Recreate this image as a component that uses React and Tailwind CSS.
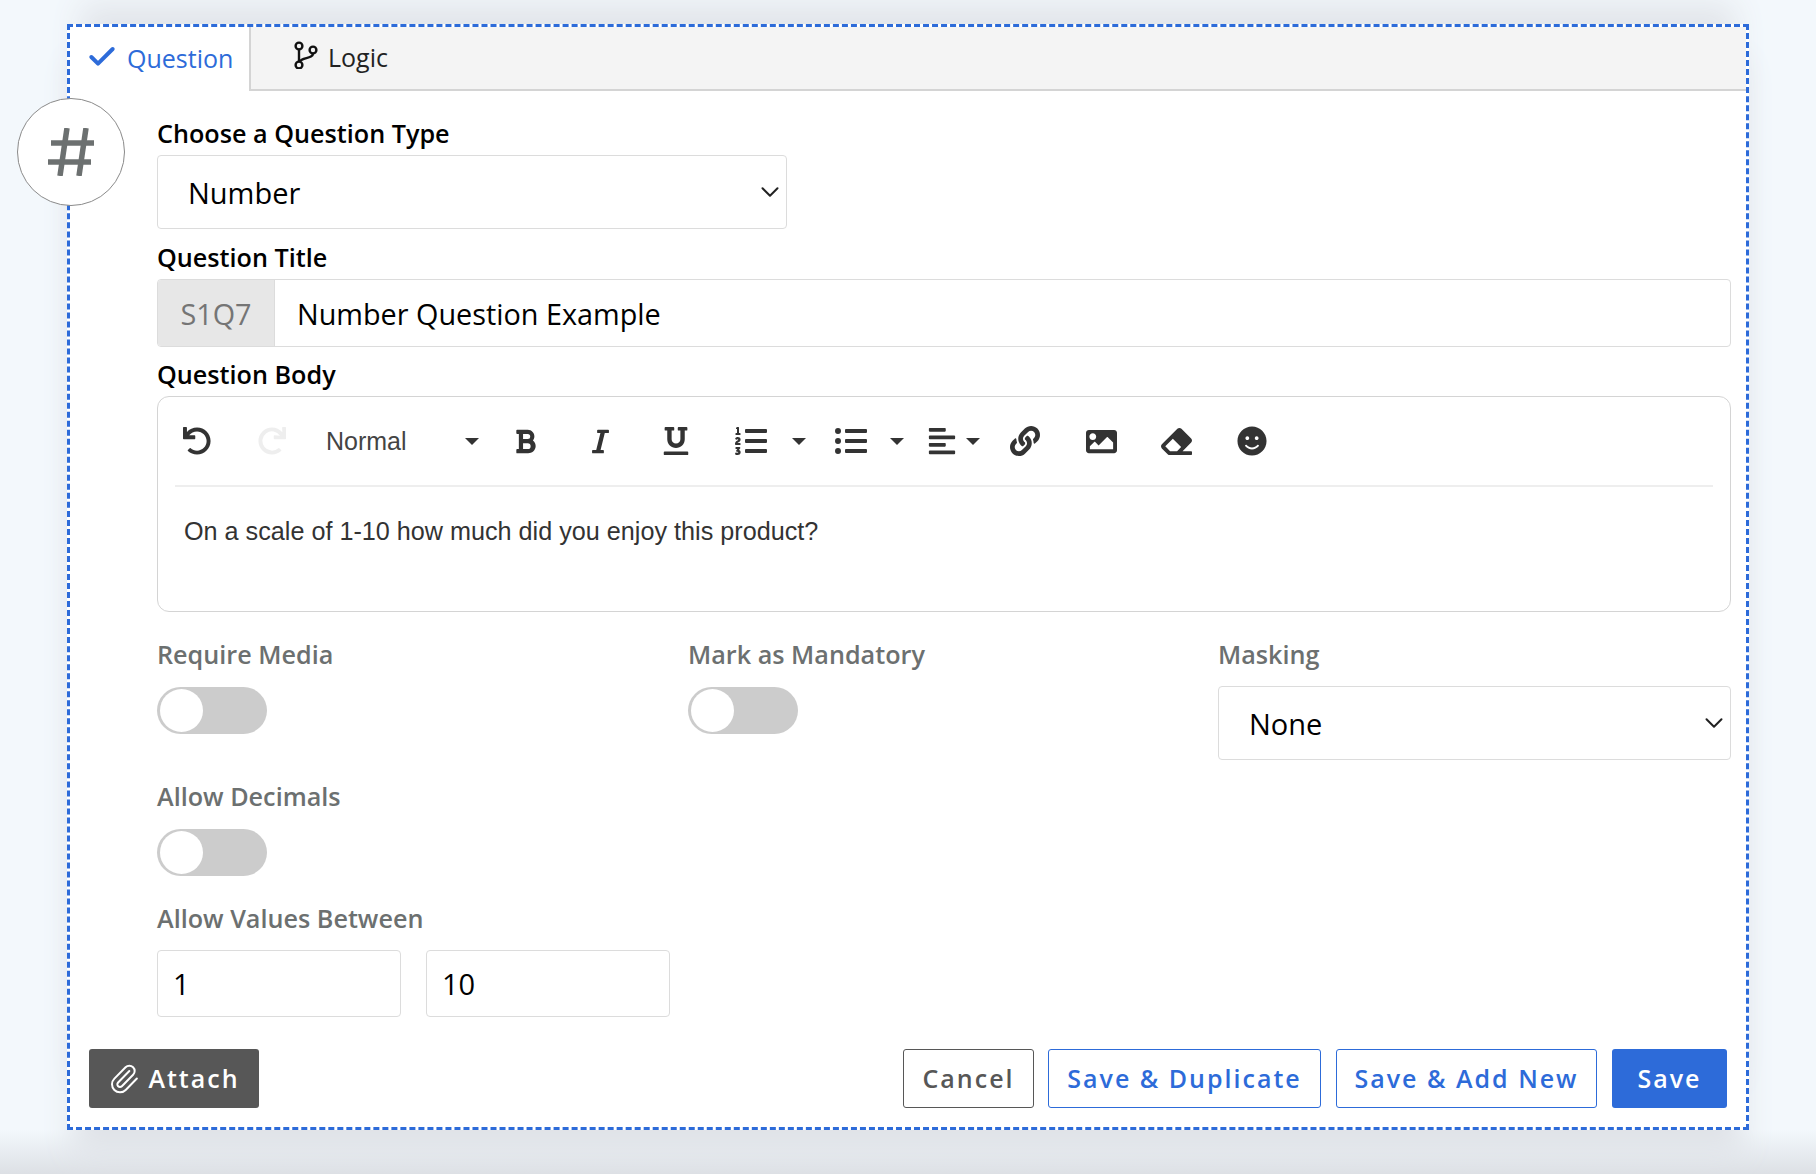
import React from "react";
import { ChevronDown, Check, Paperclip } from "lucide-react";
import {
  FaUndo,
  FaRedo,
  FaBold,
  FaItalic,
  FaUnderline,
  FaListOl,
  FaListUl,
  FaAlignLeft,
  FaLink,
  FaImage,
  FaEraser,
  FaSmile,
} from "react-icons/fa";

const Label = ({ children, muted = false, className = "" }) => (
  <label
    className={`block text-[25.2px] leading-[32px] font-semibold ${
      muted ? "text-[#6c7070]" : "text-black"
    } ${className}`}
  >
    {children}
  </label>
);

const SelectBox = ({ value }) => (
  <div className="flex h-[74px] items-center justify-between rounded-[4px] border border-[#dcdcdc] bg-white pl-[30px] pr-[1px] text-[29px] text-black">
    <span className="pt-[2px]">{value}</span>
    <ChevronDown size={30} strokeWidth={1.6} className="text-[#222]" />
  </div>
);

const Toggle = () => (
  <div className="flex h-[47px] w-[110px] items-center rounded-full bg-[#cccccc] pl-[3px]">
    <span className="h-[43px] w-[43px] rounded-full bg-white" />
  </div>
);

const Caret = ({ className = "" }) => (
  <span
    className={`h-0 w-0 shrink-0 border-x-[7px] border-t-[7px] border-x-transparent border-t-[#333] ${className}`}
  />
);

const HashIcon = () => (
  <svg width="46" height="48" viewBox="0 0 46 48" fill="none" stroke="#6c7070" strokeWidth="5.5">
    <path d="M19 0 L12 48" />
    <path d="M38 0 L31 48" />
    <path d="M3 15 H46" />
    <path d="M0 34 H43" />
  </svg>
);

const BranchIcon = () => (
  <svg width="30" height="30" viewBox="0 0 30 30" fill="none" stroke="#111" strokeWidth="2.4" className="mb-[8px] mr-[6px]">
    <circle cx="7" cy="7" r="3.4" />
    <circle cx="7" cy="26" r="3.4" />
    <circle cx="21" cy="11" r="3.4" />
    <path d="M7 10.4 V22.6" />
    <path d="M21 14.4 C21 20 10 18 7.5 22.6" />
  </svg>
);

const ToolBtn = ({ children, className = "" }) => (
  <span className={`flex shrink-0 justify-center ${className}`}>{children}</span>
);

const Toolbar = () => (
  <div className="mx-[17px] flex h-[90px] items-center border-b-2 border-[#eeeeee] text-[#333]">
    <ToolBtn className="w-[44px]"><FaUndo size={28} /></ToolBtn>
    <ToolBtn className="ml-[31px] w-[44px]"><FaRedo size={28} className="text-[#eeeeee]" /></ToolBtn>
    <span className="ml-[32px] w-[138px] shrink-0 pt-[2px] font-['Liberation_Sans',sans-serif] text-[25px] text-[#444]">
      Normal
    </span>
    <Caret className="ml-[1px]" />
    <ToolBtn className="ml-[21px] w-[50px]"><FaBold size={27} /></ToolBtn>
    <ToolBtn className="ml-[25px] w-[50px]"><FaItalic size={27} /></ToolBtn>
    <ToolBtn className="ml-[26px] w-[50px]"><FaUnderline size={28} /></ToolBtn>
    <ToolBtn className="ml-[25px] w-[50px]"><FaListOl size={32} /></ToolBtn>
    <Caret className="ml-[16px]" />
    <ToolBtn className="ml-[20px] w-[50px]"><FaListUl size={32} /></ToolBtn>
    <Caret className="ml-[14px]" />
    <ToolBtn className="ml-[18px] w-[40px]"><FaAlignLeft size={30} /></ToolBtn>
    <Caret className="ml-[4px]" />
    <ToolBtn className="ml-[25px] w-[40px]"><FaLink size={30} /></ToolBtn>
    <ToolBtn className="ml-[36px] w-[40px]"><FaImage size={31} /></ToolBtn>
    <ToolBtn className="ml-[35px] w-[40px]"><FaEraser size={31} /></ToolBtn>
    <ToolBtn className="ml-[36px] w-[40px]"><FaSmile size={30} /></ToolBtn>
  </div>
);

export default function App() {
  return (
    <div className="h-[1174px] overflow-hidden bg-[linear-gradient(to_top,#dde0e5,#f3f8fc_44px)] pl-[67px] pt-[24px] font-['Open_Sans',sans-serif]">
      <div className="relative h-[1106px] w-[1682px] border-[3px] border-dashed border-[#2d6bd9] bg-white shadow-[0_-34px_30px_-14px_#e2e5ea,0_30px_30px_-6px_#dfe2e7]">
        {/* type badge sits over the dashed border */}
        <div className="absolute left-[-53px] top-[71px] flex h-[108px] w-[108px] items-center justify-center rounded-full border border-[#8a8a8a] bg-white">
          <HashIcon />
        </div>

        {/* Tabs */}
        <div className="flex h-[64px] border-b-2 border-[#d4d4d4] bg-[#f4f4f4]">
          <div className="mb-[-2px] flex w-[181px] items-center border-r-2 border-[#d4d4d4] bg-white pl-[16px] text-[25px] text-[#2d6bd9]">
            <Check size={32} strokeWidth={3} className="mb-[4px] mr-[9px]" />
            Question
          </div>
          <div className="flex items-center pl-[41px] text-[25px] text-[#222]">
            <BranchIcon />
            Logic
          </div>
        </div>

        <div className="pl-[87px] pr-[15px] pt-[26px]">
          <Label>Choose a Question Type</Label>
          <div className="mt-[6px] w-[630px]">
            <SelectBox value="Number" />
          </div>

          <Label className="mt-[12px]">Question Title</Label>
          <div className="mt-[6px] flex h-[68px] overflow-hidden rounded-[4px] border border-[#dcdcdc] text-[28.8px]">
            <div className="flex w-[117px] items-center justify-center border-r border-[#dcdcdc] bg-[#e7e7e7] pt-[2px] text-[#757575]">
              S1Q7
            </div>
            <div className="flex items-center pl-[22px] pt-[2px] text-black">Number Question Example</div>
          </div>

          <Label className="mt-[11px]">Question Body</Label>
          <div className="mt-[6px] h-[216px] rounded-[12px] border border-[#d4d4d4]">
            <Toolbar />
            <p className="ml-[26px] mt-[30px] font-['Liberation_Sans',sans-serif] text-[25.2px] leading-[28px] text-[#333]">
              On a scale of 1-10 how much did you enjoy this product?
            </p>
          </div>

          <div className="mt-[26px] flex">
            <div className="w-[531px]">
              <Label muted>Require Media</Label>
              <div className="mt-[17px]"><Toggle /></div>
            </div>
            <div className="w-[530px]">
              <Label muted>Mark as Mandatory</Label>
              <div className="mt-[17px]"><Toggle /></div>
            </div>
            <div className="flex-1">
              <Label muted>Masking</Label>
              <div className="mt-[16px]"><SelectBox value="None" /></div>
            </div>
          </div>

          <Label muted className="mt-[20px]">Allow Decimals</Label>
          <div className="mt-[17px]"><Toggle /></div>

          <Label muted className="mt-[26px]">Allow Values Between</Label>
          <div className="mt-[16px] flex gap-[25px]">
            <div className="flex h-[67px] w-[244px] items-center rounded-[4px] border border-[#dcdcdc] pl-[15px] text-[29px] text-black">1</div>
            <div className="flex h-[67px] w-[244px] items-center rounded-[4px] border border-[#dcdcdc] pl-[15px] text-[29px] text-black">10</div>
          </div>
        </div>

        {/* Footer */}
        <div className="mt-[32px] flex items-center pl-[19px] pr-[19px] text-[25px] font-semibold tracking-[2px]">
          <button className="flex h-[59px] w-[170px] items-center justify-center gap-[8px] rounded-[3px] bg-[#575757] text-white">
            <Paperclip size={32} strokeWidth={1.5} />
            Attach
          </button>
          <div className="ml-auto flex gap-[14px]">
            <button className="h-[59px] w-[131px] rounded-[3px] border border-[#575757] text-[#575757]">Cancel</button>
            <button className="h-[59px] w-[273px] rounded-[3px] border border-[#2d6bd9] text-[#2d6bd9]">Save &amp; Duplicate</button>
            <button className="ml-[1px] h-[59px] w-[261px] rounded-[3px] border border-[#2d6bd9] text-[#2d6bd9]">Save &amp; Add New</button>
            <button className="ml-[1px] h-[59px] w-[115px] rounded-[3px] bg-[#2d6bd9] text-white">Save</button>
          </div>
        </div>
      </div>
    </div>
  );
}
